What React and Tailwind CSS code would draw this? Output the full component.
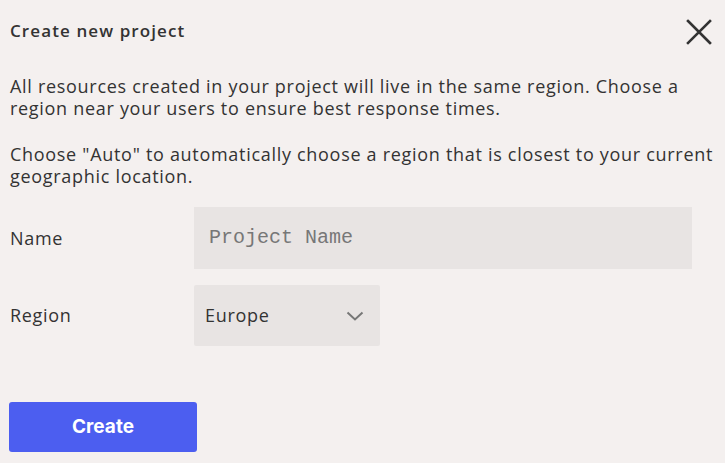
import React from "react";

export default function App() {
  return (
    <div className="w-[725px] h-[463px] bg-[#f4f0ef] text-[#333333] overflow-hidden" style={{ fontFamily: "'Open Sans', 'Noto Sans', sans-serif" }}>
      <div className="flex items-center justify-between pl-[10px] pr-[14px] pt-[16px] h-[44px]">
        <h1 className="text-[17px] font-semibold leading-none tracking-[1.1px]">Create new project</h1>
        <svg width="26" height="26" viewBox="0 0 26 26" className="mt-[3px] mr-[-1px]">
          <path d="M2 2 L24 24 M24 2 L2 24" stroke="#333" strokeWidth="2.6" strokeLinecap="square" />
        </svg>
      </div>
      <div className="pl-[10px] pt-[31px] text-[18px] leading-[22px] tracking-[0.7px] w-[725px]">
        <p>All resources created in your project will live in the same region. Choose a region near your users to ensure best response times.</p>
        <p className="mt-[24px]">Choose "Auto" to automatically choose a region that is closest to your current geographic location.</p>
      </div>
      <div className="pl-[10px] mt-[20px] flex flex-col gap-[16px]">
        <div className="flex items-center">
          <label className="w-[184px] text-[18px] tracking-[0.7px]">Name</label>
          <div className="w-[498px] h-[62px] bg-[#e8e4e3] flex items-center pl-[15px] text-[20px] text-[#777]" style={{ fontFamily: "'Liberation Mono', monospace" }}>
            Project Name
          </div>
        </div>
        <div className="flex items-center">
          <label className="w-[184px] text-[18px] tracking-[0.7px]">Region</label>
          <div className="w-[186px] h-[61px] bg-[#e8e4e3] rounded-[2px] flex items-center justify-between pl-[11px] pr-[16px] text-[18px] tracking-[0.7px]">
            <span>Europe</span>
            <svg width="18" height="10" viewBox="0 0 18 10">
              <path d="M1.5 1.5 L9 8.5 L16.5 1.5" fill="none" stroke="#777" strokeWidth="2" />
            </svg>
          </div>
        </div>
      </div>
      <div className="pl-[9px] mt-[56px]">
        <button className="w-[188px] h-[50px] bg-[#4c5ef0] rounded-[3px] text-white text-[19px] font-bold" style={{ fontFamily: "Inter, sans-serif" }}>
          Create
        </button>
      </div>
    </div>
  );
}
